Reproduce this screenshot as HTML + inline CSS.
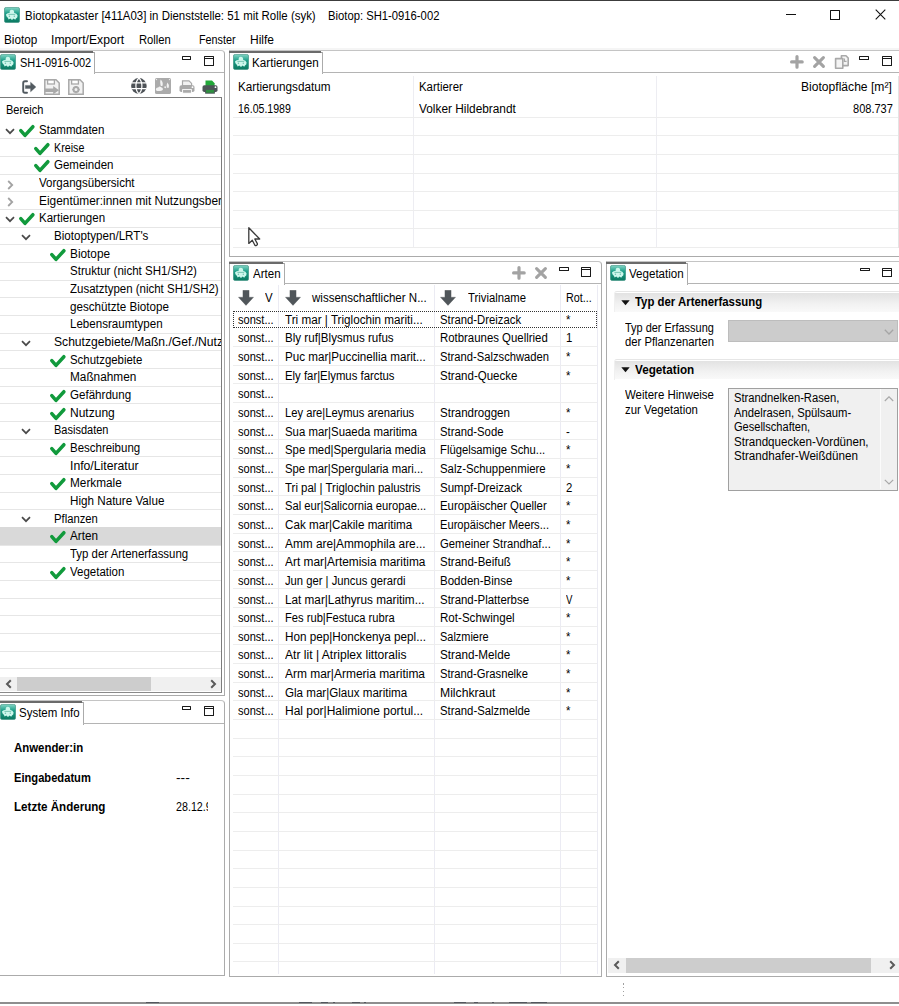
<!DOCTYPE html><html><head><meta charset="utf-8"><style>
html,body{margin:0;padding:0;background:#fff;overflow:hidden}
body{width:899px;height:1006px;position:relative;font-family:"Liberation Sans",sans-serif;font-size:11.5px;color:#000}
.t{position:absolute;white-space:nowrap;line-height:14px;font-size:12.5px;transform:scaleX(0.9);transform-origin:0 0}
.b{font-weight:bold}
</style></head><body>
<div style="position:absolute;left:0.00px;top:0.00px;width:899.00px;height:1.00px;background:#3c3c3c"></div>
<svg width="16" height="16" viewBox="0 0 16 16" style="position:absolute;left:4px;top:7px">
<defs><linearGradient id="g1" x1="0" y1="0" x2="0" y2="1"><stop offset="0" stop-color="#86d6c6"/><stop offset="0.4" stop-color="#1d9f89"/><stop offset="1" stop-color="#0b7860"/></linearGradient></defs>
<rect x="0.4" y="0.4" width="15.2" height="15.2" rx="1.8" fill="url(#g1)" stroke="#3f9484" stroke-width="0.7"/>
<path d="M5.6 6 Q5.4 2.8 7.8 2.7 Q10.4 2.8 10.2 6 Q12.6 5.8 13.6 8.6 Q13.6 11 12 11.6 L11.2 12.8 L9.6 11.6 L8 12.9 L6.3 11.6 L4.6 12.6 L4 11 Q1.9 9.6 2 7.6 Q3 5.6 5.6 6 Z" fill="#cdf7ec"/>
<path d="M4.4 7.4 H11.2" stroke="#6fbfae" stroke-width="0.9"/>
<circle cx="5.4" cy="9.3" r="0.7" fill="#6fbfae"/><circle cx="10.3" cy="9.3" r="0.7" fill="#6fbfae"/>
</svg><div class="t" style="left:25.00px;top:9.00px;transform:scaleX(0.9162);">Biotopkataster [411A03] in Dienststelle: 51 mit Rolle (syk)</div>
<div class="t" style="left:328.00px;top:9.00px;transform:scaleX(0.9006);">Biotop: SH1-0916-002</div>
<div style="position:absolute;left:786.00px;top:14.00px;width:10.00px;height:1.00px;background:#111"></div>
<div style="position:absolute;left:830.00px;top:10.00px;width:10.00px;height:10.00px;border:1.2px solid #111;box-sizing:border-box;border-radius:0.5px"></div>
<svg width="12" height="12" viewBox="0 0 12 12" style="position:absolute;left:874.5px;top:9.3px"><path d="M0.7 0.7 L10.3 10.3 M10.3 0.7 L0.7 10.3" stroke="#111" stroke-width="1.1"/></svg>
<div class="t" style="left:3.75px;top:33.00px;transform:scaleX(0.9393);">Biotop</div>
<div class="t" style="left:51.30px;top:33.00px;transform:scaleX(0.9747);">Import/Export</div>
<div class="t" style="left:138.90px;top:33.00px;transform:scaleX(0.8983);">Rollen</div>
<div class="t" style="left:198.70px;top:33.00px;transform:scaleX(0.8632);">Fenster</div>
<div class="t" style="left:249.70px;top:33.00px;transform:scaleX(0.9600);">Hilfe</div>
<div style="position:absolute;left:0.00px;top:48.00px;width:899.00px;height:2.00px;background:#f5f5f5"></div>
<div style="position:absolute;left:0.00px;top:50.00px;width:225.00px;height:646.00px;border:1px solid #ababab;border-top-color:#c4c4c4;box-sizing:border-box;border-left:none;border-top-right-radius:4px;"></div>
<div style="position:absolute;left:0.00px;top:51.00px;width:93.00px;height:2.00px;background:#6b6b6b"></div>
<div style="position:absolute;left:93.00px;top:52.00px;width:1.00px;height:1.00px;background:#9a9a9a"></div>
<div style="position:absolute;left:94.00px;top:52.00px;width:1.00px;height:22.00px;background:#ababab"></div>
<div style="position:absolute;left:94.00px;top:72.00px;width:130.00px;height:1.00px;background:#b4b4b4"></div>
<svg width="16" height="16" viewBox="0 0 16 16" style="position:absolute;left:0px;top:54px">
<defs><linearGradient id="g2" x1="0" y1="0" x2="0" y2="1"><stop offset="0" stop-color="#86d6c6"/><stop offset="0.4" stop-color="#1d9f89"/><stop offset="1" stop-color="#0b7860"/></linearGradient></defs>
<rect x="0.4" y="0.4" width="15.2" height="15.2" rx="1.8" fill="url(#g2)" stroke="#3f9484" stroke-width="0.7"/>
<path d="M5.6 6 Q5.4 2.8 7.8 2.7 Q10.4 2.8 10.2 6 Q12.6 5.8 13.6 8.6 Q13.6 11 12 11.6 L11.2 12.8 L9.6 11.6 L8 12.9 L6.3 11.6 L4.6 12.6 L4 11 Q1.9 9.6 2 7.6 Q3 5.6 5.6 6 Z" fill="#cdf7ec"/>
<path d="M4.4 7.4 H11.2" stroke="#6fbfae" stroke-width="0.9"/>
<circle cx="5.4" cy="9.3" r="0.7" fill="#6fbfae"/><circle cx="10.3" cy="9.3" r="0.7" fill="#6fbfae"/>
</svg><div class="t" style="left:19.60px;top:56.00px;transform:scaleX(0.8758);">SH1-0916-002</div>
<div style="position:absolute;left:181.80px;top:56.00px;width:9.70px;height:3.80px;border:1.3px solid #1a1a1a;box-sizing:border-box;border-radius:0.6px"></div>
<div style="position:absolute;left:204.00px;top:56.00px;width:9.80px;height:9.80px;border:1.3px solid #1a1a1a;box-sizing:border-box;border-radius:0.6px"></div>
<div style="position:absolute;left:204.00px;top:58.20px;width:9.80px;height:1.20px;background:#1a1a1a"></div>
<svg width="16" height="16" viewBox="0 0 16 16" style="position:absolute;left:21px;top:78.5px"><path d="M6 2.2 H4 Q2.2 2.2 2.2 4 V12 Q2.2 13.8 4 13.8 H6" fill="none" stroke="#525a60" stroke-width="1.9" stroke-linecap="round"/><path d="M4.4 6.4 H9.6 V3.2 L14.9 8 L9.6 12.8 V9.6 H4.4 Z" fill="#525a60" stroke="#525a60" stroke-width="0.4" stroke-linejoin="round"/></svg>
<svg width="16" height="16" viewBox="0 0 16 16" style="position:absolute;left:44px;top:78.5px"><path d="M0.8 0.8 H12 L15.2 4 V15.2 H0.8 Z" fill="#f2f2f2" stroke="#a9a9a9" stroke-width="1.5"/><rect x="3.6" y="1" width="6.8" height="4" fill="#fff" stroke="#a9a9a9" stroke-width="1.3"/><path d="M1 9.4 H9.2 V7 L15 11.2 L9.2 15.2 V13 H1 Z" fill="#a9a9a9"/></svg>
<svg width="16" height="16" viewBox="0 0 16 16" style="position:absolute;left:68px;top:78.5px"><path d="M0.8 0.8 H12 L15.2 4 V15.2 H0.8 Z" fill="#f2f2f2" stroke="#a9a9a9" stroke-width="1.5"/><rect x="3.6" y="1" width="6.8" height="4" fill="#fff" stroke="#a9a9a9" stroke-width="1.3"/><circle cx="8" cy="10.6" r="2.5" fill="none" stroke="#a9a9a9" stroke-width="2"/><path d="M8 6.9 V8 M8 13.2 V14.3 M4.3 10.6 H5.4 M10.6 10.6 H11.7" stroke="#a9a9a9" stroke-width="1.4"/></svg>
<svg width="16" height="16" viewBox="0 0 16 16" style="position:absolute;left:131.2px;top:78.3px"><circle cx="7.9" cy="7.9" r="7.8" fill="#4d5257"/><path d="M0.2 4.9 H15.6 M0.2 10.7 H15.6" stroke="#fff" stroke-width="1.2"/><path d="M7.9 0.1 Q4.9 3 4.9 7.9 Q4.9 12.8 7.9 15.7 M7.9 0.1 Q10.9 3 10.9 7.9 Q10.9 12.8 7.9 15.7" fill="none" stroke="#fff" stroke-width="1.2"/></svg>
<svg width="16" height="16" viewBox="0 0 16 16" style="position:absolute;left:155.2px;top:78.2px"><rect x="0" y="0" width="16" height="16" rx="1.6" fill="#ababab"/><path d="M5.6 1.4 Q8.4 4 7.6 7.4 Q6.8 8.8 5.6 7.4 Q4.6 4.2 5.6 1.4 Z" fill="#f2f2f2"/><path d="M0.8 11.6 Q1 9.2 3.2 9.4 Q4.6 7.8 6.2 9.2 Q8.2 9.4 7.9 11.8 Q7.4 13 5 12.9 L2 12.9 Q0.8 12.6 0.8 11.6 Z" fill="#f2f2f2"/><path d="M12.4 4.4 Q14.8 7 13.8 9.6 Q12.6 10.4 11.8 9 Q11.4 6.6 12.4 4.4 Z M9.6 8.2 Q11.2 8 11.2 9.6 Q10.4 10.8 9.3 9.8 Z" fill="#f2f2f2"/><circle cx="1.5" cy="1.6" r="0.7" fill="#f2f2f2"/><circle cx="14.5" cy="1.6" r="0.7" fill="#f2f2f2"/></svg>
<svg width="16" height="14" viewBox="0 0 16 14" style="position:absolute;left:179px;top:79.5px"><path d="M3.5 0.8 H10 L12.6 3.4 V5.5 H3.5 Z" fill="#f2f2f2" stroke="#a9a9a9" stroke-width="1.2"/><rect x="0.5" y="5.2" width="15" height="6.8" rx="1.8" fill="#a9a9a9"/><rect x="3.6" y="9.6" width="8.8" height="3.6" fill="#a9a9a9" stroke="#fff" stroke-width="0.9"/><circle cx="13.5" cy="7.2" r="0.9" fill="#fff"/></svg>
<svg width="16" height="14" viewBox="0 0 16 14" style="position:absolute;left:202.3px;top:79.5px"><path d="M3.5 0.6 H10 L12.6 3.2 V6 H3.5 Z" fill="#22a83a"/><rect x="0.5" y="5.2" width="15" height="6.8" rx="1.8" fill="#4d5558"/><rect x="3.6" y="9.4" width="8.8" height="3.8" fill="#2e8f40" stroke="#4d5558" stroke-width="0.9"/><circle cx="13.5" cy="7.2" r="0.9" fill="#fff"/></svg>
<div style="position:absolute;left:0.00px;top:97.00px;width:222.00px;height:1.00px;background:#7c7c7c"></div>
<div style="position:absolute;left:221.00px;top:97.00px;width:1.00px;height:596.00px;background:#7c7c7c"></div>
<div style="position:absolute;left:0.00px;top:692.00px;width:222.00px;height:1.00px;background:#8a8a8a"></div>
<div class="t" style="left:6.40px;top:103.00px;transform:scaleX(0.8821);">Bereich</div>
<div style="position:absolute;left:0;top:97px;width:221px;height:579px;overflow:hidden">
<div style="position:absolute;left:0.00px;top:41.30px;width:221.00px;height:1.00px;background:#e6e6e6"></div>
<div style="position:absolute;left:0.00px;top:58.96px;width:221.00px;height:1.00px;background:#e6e6e6"></div>
<div style="position:absolute;left:0.00px;top:76.63px;width:221.00px;height:1.00px;background:#e6e6e6"></div>
<div style="position:absolute;left:0.00px;top:94.30px;width:221.00px;height:1.00px;background:#e6e6e6"></div>
<div style="position:absolute;left:0.00px;top:111.97px;width:221.00px;height:1.00px;background:#e6e6e6"></div>
<div style="position:absolute;left:0.00px;top:129.63px;width:221.00px;height:1.00px;background:#e6e6e6"></div>
<div style="position:absolute;left:0.00px;top:147.30px;width:221.00px;height:1.00px;background:#e6e6e6"></div>
<div style="position:absolute;left:0.00px;top:164.97px;width:221.00px;height:1.00px;background:#e6e6e6"></div>
<div style="position:absolute;left:0.00px;top:182.63px;width:221.00px;height:1.00px;background:#e6e6e6"></div>
<div style="position:absolute;left:0.00px;top:200.30px;width:221.00px;height:1.00px;background:#e6e6e6"></div>
<div style="position:absolute;left:0.00px;top:217.97px;width:221.00px;height:1.00px;background:#e6e6e6"></div>
<div style="position:absolute;left:0.00px;top:235.63px;width:221.00px;height:1.00px;background:#e6e6e6"></div>
<div style="position:absolute;left:0.00px;top:253.30px;width:221.00px;height:1.00px;background:#e6e6e6"></div>
<div style="position:absolute;left:0.00px;top:270.97px;width:221.00px;height:1.00px;background:#e6e6e6"></div>
<div style="position:absolute;left:0.00px;top:288.63px;width:221.00px;height:1.00px;background:#e6e6e6"></div>
<div style="position:absolute;left:0.00px;top:306.30px;width:221.00px;height:1.00px;background:#e6e6e6"></div>
<div style="position:absolute;left:0.00px;top:323.97px;width:221.00px;height:1.00px;background:#e6e6e6"></div>
<div style="position:absolute;left:0.00px;top:341.64px;width:221.00px;height:1.00px;background:#e6e6e6"></div>
<div style="position:absolute;left:0.00px;top:359.30px;width:221.00px;height:1.00px;background:#e6e6e6"></div>
<div style="position:absolute;left:0.00px;top:376.97px;width:221.00px;height:1.00px;background:#e6e6e6"></div>
<div style="position:absolute;left:0.00px;top:394.64px;width:221.00px;height:1.00px;background:#e6e6e6"></div>
<div style="position:absolute;left:0.00px;top:412.30px;width:221.00px;height:1.00px;background:#e6e6e6"></div>
<div style="position:absolute;left:0.00px;top:429.97px;width:221.00px;height:1.00px;background:#e6e6e6"></div>
<div style="position:absolute;left:0.00px;top:429.97px;width:221.00px;height:17.67px;background:#d9d9d9"></div>
<div style="position:absolute;left:0.00px;top:447.64px;width:221.00px;height:1.00px;background:#e6e6e6"></div>
<div style="position:absolute;left:0.00px;top:465.31px;width:221.00px;height:1.00px;background:#e6e6e6"></div>
<div style="position:absolute;left:0.00px;top:482.97px;width:221.00px;height:1.00px;background:#e6e6e6"></div>
<div style="position:absolute;left:0.00px;top:500.64px;width:221.00px;height:1.00px;background:#e6e6e6"></div>
<div style="position:absolute;left:0.00px;top:518.31px;width:221.00px;height:1.00px;background:#e6e6e6"></div>
<div style="position:absolute;left:0.00px;top:535.97px;width:221.00px;height:1.00px;background:#e6e6e6"></div>
<div style="position:absolute;left:0.00px;top:553.64px;width:221.00px;height:1.00px;background:#e6e6e6"></div>
<div style="position:absolute;left:0.00px;top:571.31px;width:221.00px;height:1.00px;background:#e6e6e6"></div>
<svg width="10" height="7" viewBox="0 0 10 7" style="position:absolute;left:5.20px;top:30.53px"><path d="M1 1.2 L5 5.2 L9 1.2" fill="none" stroke="#4a4a4a" stroke-width="1.7"/></svg><svg width="18" height="17" viewBox="0 0 18 17" style="position:absolute;left:17.60px;top:26.13px"><path d="M2.8 7.6 L7 12.4 L14.9 3.7" fill="none" stroke="#119a3c" stroke-width="3.5" stroke-linecap="round" stroke-linejoin="round"/></svg><div class="t" style="left:38.70px;top:26.00px;transform:scaleX(0.9238);">Stammdaten</div>
<svg width="18" height="17" viewBox="0 0 18 17" style="position:absolute;left:33.10px;top:43.80px"><path d="M2.8 7.6 L7 12.4 L14.9 3.7" fill="none" stroke="#119a3c" stroke-width="3.5" stroke-linecap="round" stroke-linejoin="round"/></svg><div class="t" style="left:54.20px;top:44.00px;transform:scaleX(0.8559);">Kreise</div>
<svg width="18" height="17" viewBox="0 0 18 17" style="position:absolute;left:33.10px;top:61.46px"><path d="M2.8 7.6 L7 12.4 L14.9 3.7" fill="none" stroke="#119a3c" stroke-width="3.5" stroke-linecap="round" stroke-linejoin="round"/></svg><div class="t" style="left:54.20px;top:61.00px;transform:scaleX(0.9195);">Gemeinden</div>
<svg width="7" height="10" viewBox="0 0 7 10" style="position:absolute;left:6.80px;top:82.63px"><path d="M1.2 1 L5.2 5 L1.2 9" fill="none" stroke="#a3a3a3" stroke-width="1.8"/></svg><div class="t" style="left:38.70px;top:79.00px;transform:scaleX(0.9227);">Vorgangs&uuml;bersicht</div>
<svg width="7" height="10" viewBox="0 0 7 10" style="position:absolute;left:6.80px;top:100.30px"><path d="M1.2 1 L5.2 5 L1.2 9" fill="none" stroke="#a3a3a3" stroke-width="1.8"/></svg><div class="t" style="left:38.70px;top:97.00px;transform:scaleX(0.9506);">Eigent&uuml;mer:innen mit Nutzungsber</div>
<svg width="10" height="7" viewBox="0 0 10 7" style="position:absolute;left:5.20px;top:118.87px"><path d="M1 1.2 L5 5.2 L9 1.2" fill="none" stroke="#4a4a4a" stroke-width="1.7"/></svg><svg width="18" height="17" viewBox="0 0 18 17" style="position:absolute;left:17.60px;top:114.47px"><path d="M2.8 7.6 L7 12.4 L14.9 3.7" fill="none" stroke="#119a3c" stroke-width="3.5" stroke-linecap="round" stroke-linejoin="round"/></svg><div class="t" style="left:38.70px;top:114.00px;transform:scaleX(0.9232);">Kartierungen</div>
<svg width="10" height="7" viewBox="0 0 10 7" style="position:absolute;left:20.80px;top:136.53px"><path d="M1 1.2 L5 5.2 L9 1.2" fill="none" stroke="#4a4a4a" stroke-width="1.7"/></svg><div class="t" style="left:54.20px;top:132.00px;transform:scaleX(0.9300);">Biotoptypen/LRT's</div>
<svg width="18" height="17" viewBox="0 0 18 17" style="position:absolute;left:48.90px;top:149.80px"><path d="M2.8 7.6 L7 12.4 L14.9 3.7" fill="none" stroke="#119a3c" stroke-width="3.5" stroke-linecap="round" stroke-linejoin="round"/></svg><div class="t" style="left:70.00px;top:150.00px;transform:scaleX(0.9458);">Biotope</div>
<div class="t" style="left:70.00px;top:167.00px;transform:scaleX(0.9229);">Struktur (nicht SH1/SH2)</div>
<div class="t" style="left:70.00px;top:185.00px;transform:scaleX(0.9185);">Zusatztypen (nicht SH1/SH2)</div>
<div class="t" style="left:70.00px;top:203.00px;transform:scaleX(0.9304);">gesch&uuml;tzte Biotope</div>
<div class="t" style="left:70.00px;top:220.00px;transform:scaleX(0.9251);">Lebensraumtypen</div>
<svg width="10" height="7" viewBox="0 0 10 7" style="position:absolute;left:20.80px;top:242.53px"><path d="M1 1.2 L5 5.2 L9 1.2" fill="none" stroke="#4a4a4a" stroke-width="1.7"/></svg><div class="t" style="left:54.20px;top:238.00px;transform:scaleX(0.9690);">Schutzgebiete/Ma&szlig;n./Gef./Nutz</div>
<svg width="18" height="17" viewBox="0 0 18 17" style="position:absolute;left:48.90px;top:255.80px"><path d="M2.8 7.6 L7 12.4 L14.9 3.7" fill="none" stroke="#119a3c" stroke-width="3.5" stroke-linecap="round" stroke-linejoin="round"/></svg><div class="t" style="left:70.00px;top:256.00px;transform:scaleX(0.9129);">Schutzgebiete</div>
<div class="t" style="left:70.00px;top:273.00px;transform:scaleX(0.9444);">Ma&szlig;nahmen</div>
<svg width="18" height="17" viewBox="0 0 18 17" style="position:absolute;left:48.90px;top:291.13px"><path d="M2.8 7.6 L7 12.4 L14.9 3.7" fill="none" stroke="#119a3c" stroke-width="3.5" stroke-linecap="round" stroke-linejoin="round"/></svg><div class="t" style="left:70.00px;top:291.00px;transform:scaleX(0.9258);">Gef&auml;hrdung</div>
<svg width="18" height="17" viewBox="0 0 18 17" style="position:absolute;left:48.90px;top:308.80px"><path d="M2.8 7.6 L7 12.4 L14.9 3.7" fill="none" stroke="#119a3c" stroke-width="3.5" stroke-linecap="round" stroke-linejoin="round"/></svg><div class="t" style="left:70.00px;top:309.00px;transform:scaleX(0.9614);">Nutzung</div>
<svg width="10" height="7" viewBox="0 0 10 7" style="position:absolute;left:20.80px;top:330.87px"><path d="M1 1.2 L5 5.2 L9 1.2" fill="none" stroke="#4a4a4a" stroke-width="1.7"/></svg><div class="t" style="left:54.20px;top:326.00px;transform:scaleX(0.8803);">Basisdaten</div>
<svg width="18" height="17" viewBox="0 0 18 17" style="position:absolute;left:48.90px;top:344.14px"><path d="M2.8 7.6 L7 12.4 L14.9 3.7" fill="none" stroke="#119a3c" stroke-width="3.5" stroke-linecap="round" stroke-linejoin="round"/></svg><div class="t" style="left:70.00px;top:344.00px;transform:scaleX(0.9175);">Beschreibung</div>
<div class="t" style="left:70.00px;top:362.00px;transform:scaleX(0.9772);">Info/Literatur</div>
<svg width="18" height="17" viewBox="0 0 18 17" style="position:absolute;left:48.90px;top:379.47px"><path d="M2.8 7.6 L7 12.4 L14.9 3.7" fill="none" stroke="#119a3c" stroke-width="3.5" stroke-linecap="round" stroke-linejoin="round"/></svg><div class="t" style="left:70.00px;top:379.00px;transform:scaleX(0.9435);">Merkmale</div>
<div class="t" style="left:70.00px;top:397.00px;transform:scaleX(0.9328);">High Nature Value</div>
<svg width="10" height="7" viewBox="0 0 10 7" style="position:absolute;left:20.80px;top:419.20px"><path d="M1 1.2 L5 5.2 L9 1.2" fill="none" stroke="#4a4a4a" stroke-width="1.7"/></svg><div class="t" style="left:54.20px;top:415.00px;transform:scaleX(0.9012);">Pflanzen</div>
<svg width="18" height="17" viewBox="0 0 18 17" style="position:absolute;left:48.90px;top:432.47px"><path d="M2.8 7.6 L7 12.4 L14.9 3.7" fill="none" stroke="#119a3c" stroke-width="3.5" stroke-linecap="round" stroke-linejoin="round"/></svg><div class="t" style="left:70.00px;top:432.00px;transform:scaleX(0.9365);">Arten</div>
<div class="t" style="left:70.00px;top:450.00px;transform:scaleX(0.9141);">Typ der Artenerfassung</div>
<svg width="18" height="17" viewBox="0 0 18 17" style="position:absolute;left:48.90px;top:467.81px"><path d="M2.8 7.6 L7 12.4 L14.9 3.7" fill="none" stroke="#119a3c" stroke-width="3.5" stroke-linecap="round" stroke-linejoin="round"/></svg><div class="t" style="left:70.00px;top:468.00px;transform:scaleX(0.9188);">Vegetation</div>
</div>
<div style="position:absolute;left:0.00px;top:676.80px;width:221.00px;height:14.60px;background:#f0f0f0"></div>
<div style="position:absolute;left:16.80px;top:676.80px;width:134.50px;height:14.60px;background:#cdcdcd"></div>
<svg width="8" height="10" viewBox="0 0 8 10" style="position:absolute;left:4.5px;top:679px"><path d="M5.8 1.2 L2 5 L5.8 8.8" fill="none" stroke="#5a5a5a" stroke-width="2"/></svg><svg width="8" height="10" viewBox="0 0 8 10" style="position:absolute;left:208.5px;top:679px"><path d="M2.2 1.2 L6 5 L2.2 8.8" fill="none" stroke="#5a5a5a" stroke-width="2"/></svg>
<div style="position:absolute;left:0.00px;top:700.00px;width:225.00px;height:276.00px;border:1px solid #ababab;border-top-color:#c4c4c4;box-sizing:border-box;border-left:none;border-top-right-radius:4px;"></div>
<div style="position:absolute;left:0.00px;top:701.00px;width:82.00px;height:2.00px;background:#6b6b6b"></div>
<div style="position:absolute;left:82.00px;top:702.00px;width:1.00px;height:1.00px;background:#9a9a9a"></div>
<div style="position:absolute;left:83.00px;top:702.00px;width:1.00px;height:23.00px;background:#ababab"></div>
<div style="position:absolute;left:83.00px;top:723.00px;width:141.00px;height:1.00px;background:#b4b4b4"></div>
<svg width="16" height="16" viewBox="0 0 16 16" style="position:absolute;left:0px;top:704.4px">
<defs><linearGradient id="g3" x1="0" y1="0" x2="0" y2="1"><stop offset="0" stop-color="#86d6c6"/><stop offset="0.4" stop-color="#1d9f89"/><stop offset="1" stop-color="#0b7860"/></linearGradient></defs>
<rect x="0.4" y="0.4" width="15.2" height="15.2" rx="1.8" fill="url(#g3)" stroke="#3f9484" stroke-width="0.7"/>
<path d="M5.6 6 Q5.4 2.8 7.8 2.7 Q10.4 2.8 10.2 6 Q12.6 5.8 13.6 8.6 Q13.6 11 12 11.6 L11.2 12.8 L9.6 11.6 L8 12.9 L6.3 11.6 L4.6 12.6 L4 11 Q1.9 9.6 2 7.6 Q3 5.6 5.6 6 Z" fill="#cdf7ec"/>
<path d="M4.4 7.4 H11.2" stroke="#6fbfae" stroke-width="0.9"/>
<circle cx="5.4" cy="9.3" r="0.7" fill="#6fbfae"/><circle cx="10.3" cy="9.3" r="0.7" fill="#6fbfae"/>
</svg><div class="t" style="left:19.20px;top:706.00px;transform:scaleX(0.9182);">System Info</div>
<div style="position:absolute;left:181.60px;top:706.10px;width:9.70px;height:3.80px;border:1.3px solid #1a1a1a;box-sizing:border-box;border-radius:0.6px"></div>
<div style="position:absolute;left:203.90px;top:706.10px;width:9.80px;height:9.80px;border:1.3px solid #1a1a1a;box-sizing:border-box;border-radius:0.6px"></div>
<div style="position:absolute;left:203.90px;top:708.30px;width:9.80px;height:1.20px;background:#1a1a1a"></div>
<div class="t b" style="left:14.00px;top:741.00px;transform:scaleX(0.9128);">Anwender:in</div>
<div class="t b" style="left:14.00px;top:771.00px;transform:scaleX(0.8920);">Eingabedatum</div>
<div class="t b" style="left:14.00px;top:800.00px;transform:scaleX(0.9270);">Letzte &Auml;nderung</div>
<div class="t" style="left:176.00px;top:771.00px;transform:scaleX(1.1040);">---</div>
<div style="position:absolute;left:176px;top:799px;width:31.5px;height:16px;overflow:hidden"><div class="t" style="left:0.00px;top:1px;transform:scaleX(0.8563)">28.12.9</div></div>
<div style="position:absolute;left:229.00px;top:50.00px;width:676.00px;height:207.00px;border:1px solid #ababab;border-top-color:#c4c4c4;box-sizing:border-box;border-right:none;"></div>
<div style="position:absolute;left:229.00px;top:51.00px;width:92.00px;height:2.00px;background:#6b6b6b"></div>
<div style="position:absolute;left:321.00px;top:52.00px;width:1.00px;height:1.00px;background:#9a9a9a"></div>
<div style="position:absolute;left:322.00px;top:52.00px;width:1.00px;height:22.00px;background:#ababab"></div>
<div style="position:absolute;left:322.00px;top:72.00px;width:583.00px;height:1.00px;background:#b4b4b4"></div>
<svg width="16" height="16" viewBox="0 0 16 16" style="position:absolute;left:233px;top:54.2px">
<defs><linearGradient id="g4" x1="0" y1="0" x2="0" y2="1"><stop offset="0" stop-color="#86d6c6"/><stop offset="0.4" stop-color="#1d9f89"/><stop offset="1" stop-color="#0b7860"/></linearGradient></defs>
<rect x="0.4" y="0.4" width="15.2" height="15.2" rx="1.8" fill="url(#g4)" stroke="#3f9484" stroke-width="0.7"/>
<path d="M5.6 6 Q5.4 2.8 7.8 2.7 Q10.4 2.8 10.2 6 Q12.6 5.8 13.6 8.6 Q13.6 11 12 11.6 L11.2 12.8 L9.6 11.6 L8 12.9 L6.3 11.6 L4.6 12.6 L4 11 Q1.9 9.6 2 7.6 Q3 5.6 5.6 6 Z" fill="#cdf7ec"/>
<path d="M4.4 7.4 H11.2" stroke="#6fbfae" stroke-width="0.9"/>
<circle cx="5.4" cy="9.3" r="0.7" fill="#6fbfae"/><circle cx="10.3" cy="9.3" r="0.7" fill="#6fbfae"/>
</svg><div class="t" style="left:252.10px;top:56.00px;transform:scaleX(0.9330);">Kartierungen</div>
<svg width="16" height="16" viewBox="0 0 16 16" style="position:absolute;left:788.5px;top:54px"><path d="M8 2.6 V13.2 M2.6 7.9 H13.2" stroke="#a3a3a3" stroke-width="3.2" stroke-linecap="round"/></svg><svg width="14" height="14" viewBox="0 0 14 14" style="position:absolute;left:812px;top:55px"><path d="M2.6 2.6 L11.4 11.4 M11.4 2.6 L2.6 11.4" stroke="#a3a3a3" stroke-width="3.1" stroke-linecap="round"/></svg><svg width="16" height="16" viewBox="0 0 16 16" style="position:absolute;left:834px;top:54px"><path d="M7.4 1.8 H12 L14.2 4 V11.6 H7.4 Z" fill="#f4f4f4" stroke="#a9a9a9" stroke-width="1.6" stroke-linejoin="round"/><path d="M1.6 4.6 H8.8 V14.2 H1.6 Z" fill="#f4f4f4" stroke="#a9a9a9" stroke-width="1.6" stroke-linejoin="round"/><path d="M10.4 4.6 V7.4 H12.6" fill="none" stroke="#a9a9a9" stroke-width="1.2"/></svg>
<div style="position:absolute;left:859.40px;top:56.00px;width:9.70px;height:3.80px;border:1.3px solid #1a1a1a;box-sizing:border-box;border-radius:0.6px"></div>
<div style="position:absolute;left:882.00px;top:56.00px;width:9.80px;height:9.80px;border:1.3px solid #1a1a1a;box-sizing:border-box;border-radius:0.6px"></div>
<div style="position:absolute;left:882.00px;top:58.20px;width:9.80px;height:1.20px;background:#1a1a1a"></div>
<div class="t" style="left:238.00px;top:80.00px;transform:scaleX(0.9372);">Kartierungsdatum</div>
<div class="t" style="left:419.00px;top:80.00px;transform:scaleX(0.9144);">Kartierer</div>
<div class="t" style="left:801.20px;top:80.00px;transform:scaleX(0.9680);">Biotopfl&auml;che [m&sup2;]</div>
<div style="position:absolute;left:412.70px;top:76.00px;width:1.00px;height:172.00px;background:#ededf2"></div>
<div style="position:absolute;left:656.20px;top:76.00px;width:1.00px;height:172.00px;background:#ededf2"></div>
<div style="position:absolute;left:897.50px;top:76.00px;width:1.00px;height:172.00px;background:#e4e4e4"></div>
<div style="position:absolute;left:233.00px;top:116.80px;width:665.00px;height:1.00px;background:#ededed"></div>
<div style="position:absolute;left:233.00px;top:135.40px;width:665.00px;height:1.00px;background:#ededed"></div>
<div style="position:absolute;left:233.00px;top:154.00px;width:665.00px;height:1.00px;background:#ededed"></div>
<div style="position:absolute;left:233.00px;top:172.60px;width:665.00px;height:1.00px;background:#ededed"></div>
<div style="position:absolute;left:233.00px;top:191.20px;width:665.00px;height:1.00px;background:#ededed"></div>
<div style="position:absolute;left:233.00px;top:209.80px;width:665.00px;height:1.00px;background:#ededed"></div>
<div style="position:absolute;left:233.00px;top:228.40px;width:665.00px;height:1.00px;background:#ededed"></div>
<div style="position:absolute;left:233.00px;top:247.00px;width:665.00px;height:1.00px;background:#ededed"></div>
<div class="t" style="left:238.00px;top:102.00px;transform:scaleX(0.8450);">16.05.1989</div>
<div class="t" style="left:419.00px;top:102.00px;transform:scaleX(0.9481);">Volker Hildebrandt</div>
<div class="t" style="left:852.70px;top:102.00px;transform:scaleX(0.8827);">808.737</div>
<svg width="16" height="22" viewBox="0 0 16 22" style="position:absolute;left:247px;top:226px"><path d="M1.8 1.8 V17.4 L5.3 14.2 L7.9 19.2 Q8.6 20 9.4 19.4 L10.2 18.8 Q10.6 18.2 10.2 17.4 L7.8 13 H12.7 Z" fill="#fff" stroke="#3a3a3a" stroke-width="1.3" stroke-linejoin="round"/></svg>
<div style="position:absolute;left:229.00px;top:261.00px;width:373.00px;height:716.00px;border:1px solid #ababab;border-top-color:#c4c4c4;box-sizing:border-box;border-top-right-radius:4px;"></div>
<div style="position:absolute;left:229.00px;top:262.00px;width:54.00px;height:2.00px;background:#6b6b6b"></div>
<div style="position:absolute;left:283.00px;top:263.00px;width:1.00px;height:1.00px;background:#9a9a9a"></div>
<div style="position:absolute;left:284.00px;top:263.00px;width:1.00px;height:22.00px;background:#ababab"></div>
<div style="position:absolute;left:284.00px;top:283.00px;width:317.00px;height:1.00px;background:#b4b4b4"></div>
<svg width="16" height="16" viewBox="0 0 16 16" style="position:absolute;left:233px;top:265.1px">
<defs><linearGradient id="g5" x1="0" y1="0" x2="0" y2="1"><stop offset="0" stop-color="#86d6c6"/><stop offset="0.4" stop-color="#1d9f89"/><stop offset="1" stop-color="#0b7860"/></linearGradient></defs>
<rect x="0.4" y="0.4" width="15.2" height="15.2" rx="1.8" fill="url(#g5)" stroke="#3f9484" stroke-width="0.7"/>
<path d="M5.6 6 Q5.4 2.8 7.8 2.7 Q10.4 2.8 10.2 6 Q12.6 5.8 13.6 8.6 Q13.6 11 12 11.6 L11.2 12.8 L9.6 11.6 L8 12.9 L6.3 11.6 L4.6 12.6 L4 11 Q1.9 9.6 2 7.6 Q3 5.6 5.6 6 Z" fill="#cdf7ec"/>
<path d="M4.4 7.4 H11.2" stroke="#6fbfae" stroke-width="0.9"/>
<circle cx="5.4" cy="9.3" r="0.7" fill="#6fbfae"/><circle cx="10.3" cy="9.3" r="0.7" fill="#6fbfae"/>
</svg><div class="t" style="left:252.60px;top:267.00px;transform:scaleX(0.9231);">Arten</div>
<svg width="16" height="16" viewBox="0 0 16 16" style="position:absolute;left:510.5px;top:264.7px"><path d="M8 2.6 V13.2 M2.6 7.9 H13.2" stroke="#a3a3a3" stroke-width="3.2" stroke-linecap="round"/></svg><svg width="14" height="14" viewBox="0 0 14 14" style="position:absolute;left:534px;top:265.8px"><path d="M2.6 2.6 L11.4 11.4 M11.4 2.6 L2.6 11.4" stroke="#a3a3a3" stroke-width="3.1" stroke-linecap="round"/></svg>
<div style="position:absolute;left:559.00px;top:266.90px;width:9.70px;height:3.80px;border:1.3px solid #1a1a1a;box-sizing:border-box;border-radius:0.6px"></div>
<div style="position:absolute;left:581.20px;top:266.90px;width:9.80px;height:9.80px;border:1.3px solid #1a1a1a;box-sizing:border-box;border-radius:0.6px"></div>
<div style="position:absolute;left:581.20px;top:269.10px;width:9.80px;height:1.20px;background:#1a1a1a"></div>
<svg width="16" height="16" viewBox="0 0 16 16" style="position:absolute;left:237.50px;top:290.30px"><path d="M4.9 0.3 H11.1 V7.2 H15.6 L8 15.4 L0.4 7.2 H4.9 Z" fill="#50565a" stroke="#50565a" stroke-width="0.3" stroke-linejoin="round"/></svg><div class="t" style="left:265.00px;top:291.00px;transform:scaleX(0.9157);">V</div>
<svg width="16" height="16" viewBox="0 0 16 16" style="position:absolute;left:284.80px;top:290.30px"><path d="M4.9 0.3 H11.1 V7.2 H15.6 L8 15.4 L0.4 7.2 H4.9 Z" fill="#50565a" stroke="#50565a" stroke-width="0.3" stroke-linejoin="round"/></svg><div class="t" style="left:312.49px;top:291.00px;transform:scaleX(0.9228);">wissenschaftlicher N...</div>
<svg width="16" height="16" viewBox="0 0 16 16" style="position:absolute;left:440.00px;top:290.30px"><path d="M4.9 0.3 H11.1 V7.2 H15.6 L8 15.4 L0.4 7.2 H4.9 Z" fill="#50565a" stroke="#50565a" stroke-width="0.3" stroke-linejoin="round"/></svg><div class="t" style="left:468.30px;top:291.00px;transform:scaleX(0.9033);">Trivialname</div>
<div class="t" style="left:566.20px;top:291.00px;transform:scaleX(0.8629);">Rot...</div>
<div style="position:absolute;left:278.00px;top:285.00px;width:1.00px;height:689.00px;background:#ebebf3"></div>
<div style="position:absolute;left:434.00px;top:285.00px;width:1.00px;height:689.00px;background:#ebebf3"></div>
<div style="position:absolute;left:559.60px;top:285.00px;width:1.00px;height:689.00px;background:#ebebf3"></div>
<div style="position:absolute;left:597.20px;top:285.00px;width:1.00px;height:689.00px;background:#ebebf3"></div>
<div style="position:absolute;left:233.00px;top:346.00px;width:364.00px;height:1.00px;background:#ededed"></div>
<div style="position:absolute;left:233.00px;top:364.65px;width:364.00px;height:1.00px;background:#ededed"></div>
<div style="position:absolute;left:233.00px;top:383.30px;width:364.00px;height:1.00px;background:#ededed"></div>
<div style="position:absolute;left:233.00px;top:401.95px;width:364.00px;height:1.00px;background:#ededed"></div>
<div style="position:absolute;left:233.00px;top:420.60px;width:364.00px;height:1.00px;background:#ededed"></div>
<div style="position:absolute;left:233.00px;top:439.25px;width:364.00px;height:1.00px;background:#ededed"></div>
<div style="position:absolute;left:233.00px;top:457.90px;width:364.00px;height:1.00px;background:#ededed"></div>
<div style="position:absolute;left:233.00px;top:476.55px;width:364.00px;height:1.00px;background:#ededed"></div>
<div style="position:absolute;left:233.00px;top:495.20px;width:364.00px;height:1.00px;background:#ededed"></div>
<div style="position:absolute;left:233.00px;top:513.85px;width:364.00px;height:1.00px;background:#ededed"></div>
<div style="position:absolute;left:233.00px;top:532.50px;width:364.00px;height:1.00px;background:#ededed"></div>
<div style="position:absolute;left:233.00px;top:551.15px;width:364.00px;height:1.00px;background:#ededed"></div>
<div style="position:absolute;left:233.00px;top:569.80px;width:364.00px;height:1.00px;background:#ededed"></div>
<div style="position:absolute;left:233.00px;top:588.45px;width:364.00px;height:1.00px;background:#ededed"></div>
<div style="position:absolute;left:233.00px;top:607.10px;width:364.00px;height:1.00px;background:#ededed"></div>
<div style="position:absolute;left:233.00px;top:625.75px;width:364.00px;height:1.00px;background:#ededed"></div>
<div style="position:absolute;left:233.00px;top:644.40px;width:364.00px;height:1.00px;background:#ededed"></div>
<div style="position:absolute;left:233.00px;top:663.05px;width:364.00px;height:1.00px;background:#ededed"></div>
<div style="position:absolute;left:233.00px;top:681.70px;width:364.00px;height:1.00px;background:#ededed"></div>
<div style="position:absolute;left:233.00px;top:700.35px;width:364.00px;height:1.00px;background:#ededed"></div>
<div style="position:absolute;left:233.00px;top:719.00px;width:364.00px;height:1.00px;background:#ededed"></div>
<div style="position:absolute;left:233.00px;top:737.65px;width:364.00px;height:1.00px;background:#ededed"></div>
<div style="position:absolute;left:233.00px;top:756.30px;width:364.00px;height:1.00px;background:#ededed"></div>
<div style="position:absolute;left:233.00px;top:774.95px;width:364.00px;height:1.00px;background:#ededed"></div>
<div style="position:absolute;left:233.00px;top:793.60px;width:364.00px;height:1.00px;background:#ededed"></div>
<div style="position:absolute;left:233.00px;top:812.25px;width:364.00px;height:1.00px;background:#ededed"></div>
<div style="position:absolute;left:233.00px;top:830.90px;width:364.00px;height:1.00px;background:#ededed"></div>
<div style="position:absolute;left:233.00px;top:849.55px;width:364.00px;height:1.00px;background:#ededed"></div>
<div style="position:absolute;left:233.00px;top:868.20px;width:364.00px;height:1.00px;background:#ededed"></div>
<div style="position:absolute;left:233.00px;top:886.85px;width:364.00px;height:1.00px;background:#ededed"></div>
<div style="position:absolute;left:233.00px;top:905.50px;width:364.00px;height:1.00px;background:#ededed"></div>
<div style="position:absolute;left:233.00px;top:924.15px;width:364.00px;height:1.00px;background:#ededed"></div>
<div style="position:absolute;left:233.00px;top:942.80px;width:364.00px;height:1.00px;background:#ededed"></div>
<div style="position:absolute;left:233.00px;top:961.45px;width:364.00px;height:1.00px;background:#ededed"></div>
<div class="t" style="left:237.90px;top:313.00px;transform:scaleX(0.8834);">sonst...</div>
<div class="t" style="left:285.00px;top:313.00px;transform:scaleX(0.9348);">Tri mar | Triglochin mariti...</div>
<div class="t" style="left:440.30px;top:313.00px;transform:scaleX(0.9052);">Strand-Dreizack</div>
<div class="t" style="left:566.40px;top:313.00px;transform:scaleX(0.9100);">*</div>
<div class="t" style="left:237.90px;top:331.00px;transform:scaleX(0.8834);">sonst...</div>
<div class="t" style="left:285.00px;top:331.00px;transform:scaleX(0.9275);">Bly ruf|Blysmus rufus</div>
<div class="t" style="left:440.30px;top:331.00px;transform:scaleX(0.9119);">Rotbraunes Quellried</div>
<div class="t" style="left:566.40px;top:331.00px;transform:scaleX(0.9100);">1</div>
<div class="t" style="left:237.90px;top:350.00px;transform:scaleX(0.8834);">sonst...</div>
<div class="t" style="left:285.00px;top:350.00px;transform:scaleX(0.9312);">Puc mar|Puccinellia marit...</div>
<div class="t" style="left:440.30px;top:350.00px;transform:scaleX(0.8964);">Strand-Salzschwaden</div>
<div class="t" style="left:566.40px;top:350.00px;transform:scaleX(0.9100);">*</div>
<div class="t" style="left:237.90px;top:369.00px;transform:scaleX(0.8834);">sonst...</div>
<div class="t" style="left:285.00px;top:369.00px;transform:scaleX(0.9080);">Ely far|Elymus farctus</div>
<div class="t" style="left:440.30px;top:369.00px;transform:scaleX(0.9203);">Strand-Quecke</div>
<div class="t" style="left:566.40px;top:369.00px;transform:scaleX(0.9100);">*</div>
<div class="t" style="left:237.90px;top:387.00px;transform:scaleX(0.8834);">sonst...</div>
<div class="t" style="left:237.90px;top:406.00px;transform:scaleX(0.8834);">sonst...</div>
<div class="t" style="left:285.00px;top:406.00px;transform:scaleX(0.8954);">Ley are|Leymus arenarius</div>
<div class="t" style="left:440.30px;top:406.00px;transform:scaleX(0.9234);">Strandroggen</div>
<div class="t" style="left:566.40px;top:406.00px;transform:scaleX(0.9100);">*</div>
<div class="t" style="left:237.90px;top:425.00px;transform:scaleX(0.8834);">sonst...</div>
<div class="t" style="left:285.00px;top:425.00px;transform:scaleX(0.9117);">Sua mar|Suaeda maritima</div>
<div class="t" style="left:440.30px;top:425.00px;transform:scaleX(0.9046);">Strand-Sode</div>
<div class="t" style="left:566.40px;top:425.00px;transform:scaleX(0.9100);">-</div>
<div class="t" style="left:237.90px;top:443.00px;transform:scaleX(0.8834);">sonst...</div>
<div class="t" style="left:285.00px;top:443.00px;transform:scaleX(0.9096);">Spe med|Spergularia media</div>
<div class="t" style="left:440.30px;top:443.00px;transform:scaleX(0.9015);">Fl&uuml;gelsamige Schu...</div>
<div class="t" style="left:566.40px;top:443.00px;transform:scaleX(0.9100);">*</div>
<div class="t" style="left:237.90px;top:462.00px;transform:scaleX(0.8834);">sonst...</div>
<div class="t" style="left:285.00px;top:462.00px;transform:scaleX(0.9056);">Spe mar|Spergularia mari...</div>
<div class="t" style="left:440.30px;top:462.00px;transform:scaleX(0.9103);">Salz-Schuppenmiere</div>
<div class="t" style="left:566.40px;top:462.00px;transform:scaleX(0.9100);">*</div>
<div class="t" style="left:237.90px;top:481.00px;transform:scaleX(0.8834);">sonst...</div>
<div class="t" style="left:285.00px;top:481.00px;transform:scaleX(0.9162);">Tri pal | Triglochin palustris</div>
<div class="t" style="left:440.30px;top:481.00px;transform:scaleX(0.9225);">Sumpf-Dreizack</div>
<div class="t" style="left:566.40px;top:481.00px;transform:scaleX(0.9100);">2</div>
<div class="t" style="left:237.90px;top:499.00px;transform:scaleX(0.8834);">sonst...</div>
<div class="t" style="left:285.00px;top:499.00px;transform:scaleX(0.8965);">Sal eur|Salicornia europae...</div>
<div class="t" style="left:440.30px;top:499.00px;transform:scaleX(0.9089);">Europ&auml;ischer Queller</div>
<div class="t" style="left:566.40px;top:499.00px;transform:scaleX(0.9100);">*</div>
<div class="t" style="left:237.90px;top:518.00px;transform:scaleX(0.8834);">sonst...</div>
<div class="t" style="left:285.00px;top:518.00px;transform:scaleX(0.9319);">Cak mar|Cakile maritima</div>
<div class="t" style="left:440.30px;top:518.00px;transform:scaleX(0.8913);">Europ&auml;ischer Meers...</div>
<div class="t" style="left:566.40px;top:518.00px;transform:scaleX(0.9100);">*</div>
<div class="t" style="left:237.90px;top:537.00px;transform:scaleX(0.8834);">sonst...</div>
<div class="t" style="left:285.00px;top:537.00px;transform:scaleX(0.9468);">Amm are|Ammophila are...</div>
<div class="t" style="left:440.30px;top:537.00px;transform:scaleX(0.9008);">Gemeiner Strandhaf...</div>
<div class="t" style="left:566.40px;top:537.00px;transform:scaleX(0.9100);">*</div>
<div class="t" style="left:237.90px;top:555.00px;transform:scaleX(0.8834);">sonst...</div>
<div class="t" style="left:285.00px;top:555.00px;transform:scaleX(0.9506);">Art mar|Artemisia maritima</div>
<div class="t" style="left:440.30px;top:555.00px;transform:scaleX(0.9183);">Strand-Beifu&szlig;</div>
<div class="t" style="left:566.40px;top:555.00px;transform:scaleX(0.9100);">*</div>
<div class="t" style="left:237.90px;top:574.00px;transform:scaleX(0.8834);">sonst...</div>
<div class="t" style="left:285.00px;top:574.00px;transform:scaleX(0.8992);">Jun ger | Juncus gerardi</div>
<div class="t" style="left:440.30px;top:574.00px;transform:scaleX(0.9223);">Bodden-Binse</div>
<div class="t" style="left:566.40px;top:574.00px;transform:scaleX(0.9100);">*</div>
<div class="t" style="left:237.90px;top:593.00px;transform:scaleX(0.8834);">sonst...</div>
<div class="t" style="left:285.00px;top:593.00px;transform:scaleX(0.9394);">Lat mar|Lathyrus maritim...</div>
<div class="t" style="left:440.30px;top:593.00px;transform:scaleX(0.9157);">Strand-Platterbse</div>
<div class="t" style="left:566.40px;top:593.00px;transform:scaleX(0.7711);">V</div>
<div class="t" style="left:237.90px;top:611.00px;transform:scaleX(0.8834);">sonst...</div>
<div class="t" style="left:285.00px;top:611.00px;transform:scaleX(0.8933);">Fes rub|Festuca rubra</div>
<div class="t" style="left:440.30px;top:611.00px;transform:scaleX(0.9268);">Rot-Schwingel</div>
<div class="t" style="left:566.40px;top:611.00px;transform:scaleX(0.9100);">*</div>
<div class="t" style="left:237.90px;top:630.00px;transform:scaleX(0.8834);">sonst...</div>
<div class="t" style="left:285.00px;top:630.00px;transform:scaleX(0.9363);">Hon pep|Honckenya pepl...</div>
<div class="t" style="left:440.30px;top:630.00px;transform:scaleX(0.8759);">Salzmiere</div>
<div class="t" style="left:566.40px;top:630.00px;transform:scaleX(0.9100);">*</div>
<div class="t" style="left:237.90px;top:648.00px;transform:scaleX(0.8834);">sonst...</div>
<div class="t" style="left:285.00px;top:648.00px;transform:scaleX(0.9681);">Atr lit | Atriplex littoralis</div>
<div class="t" style="left:440.30px;top:648.00px;transform:scaleX(0.9347);">Strand-Melde</div>
<div class="t" style="left:566.40px;top:648.00px;transform:scaleX(0.9100);">*</div>
<div class="t" style="left:237.90px;top:667.00px;transform:scaleX(0.8834);">sonst...</div>
<div class="t" style="left:285.00px;top:667.00px;transform:scaleX(0.9570);">Arm mar|Armeria maritima</div>
<div class="t" style="left:440.30px;top:667.00px;transform:scaleX(0.8980);">Strand-Grasnelke</div>
<div class="t" style="left:566.40px;top:667.00px;transform:scaleX(0.9100);">*</div>
<div class="t" style="left:237.90px;top:686.00px;transform:scaleX(0.8834);">sonst...</div>
<div class="t" style="left:285.00px;top:686.00px;transform:scaleX(0.9272);">Gla mar|Glaux maritima</div>
<div class="t" style="left:440.30px;top:686.00px;transform:scaleX(0.9737);">Milchkraut</div>
<div class="t" style="left:566.40px;top:686.00px;transform:scaleX(0.9100);">*</div>
<div class="t" style="left:237.90px;top:704.00px;transform:scaleX(0.8834);">sonst...</div>
<div class="t" style="left:285.00px;top:704.00px;transform:scaleX(0.9577);">Hal por|Halimione portul...</div>
<div class="t" style="left:440.30px;top:704.00px;transform:scaleX(0.9074);">Strand-Salzmelde</div>
<div class="t" style="left:566.40px;top:704.00px;transform:scaleX(0.9100);">*</div>
<div style="position:absolute;left:233.00px;top:311.00px;width:364.00px;height:17.00px;border:1px dotted #333;box-sizing:border-box"></div>
<div style="position:absolute;left:606.00px;top:261.00px;width:299.00px;height:716.00px;border:1px solid #ababab;border-top-color:#c4c4c4;box-sizing:border-box;border-right:none;"></div>
<div style="position:absolute;left:606.00px;top:262.00px;width:80.00px;height:2.00px;background:#6b6b6b"></div>
<div style="position:absolute;left:686.00px;top:263.00px;width:1.00px;height:1.00px;background:#9a9a9a"></div>
<div style="position:absolute;left:687.00px;top:263.00px;width:1.00px;height:22.00px;background:#ababab"></div>
<div style="position:absolute;left:687.00px;top:283.00px;width:218.00px;height:1.00px;background:#b4b4b4"></div>
<svg width="16" height="16" viewBox="0 0 16 16" style="position:absolute;left:610px;top:265px">
<defs><linearGradient id="g6" x1="0" y1="0" x2="0" y2="1"><stop offset="0" stop-color="#86d6c6"/><stop offset="0.4" stop-color="#1d9f89"/><stop offset="1" stop-color="#0b7860"/></linearGradient></defs>
<rect x="0.4" y="0.4" width="15.2" height="15.2" rx="1.8" fill="url(#g6)" stroke="#3f9484" stroke-width="0.7"/>
<path d="M5.6 6 Q5.4 2.8 7.8 2.7 Q10.4 2.8 10.2 6 Q12.6 5.8 13.6 8.6 Q13.6 11 12 11.6 L11.2 12.8 L9.6 11.6 L8 12.9 L6.3 11.6 L4.6 12.6 L4 11 Q1.9 9.6 2 7.6 Q3 5.6 5.6 6 Z" fill="#cdf7ec"/>
<path d="M4.4 7.4 H11.2" stroke="#6fbfae" stroke-width="0.9"/>
<circle cx="5.4" cy="9.3" r="0.7" fill="#6fbfae"/><circle cx="10.3" cy="9.3" r="0.7" fill="#6fbfae"/>
</svg><div class="t" style="left:629.40px;top:267.00px;transform:scaleX(0.9255);">Vegetation</div>
<div style="position:absolute;left:860.00px;top:267.60px;width:9.70px;height:3.80px;border:1.3px solid #1a1a1a;box-sizing:border-box;border-radius:0.6px"></div>
<div style="position:absolute;left:882.00px;top:267.60px;width:9.80px;height:9.80px;border:1.3px solid #1a1a1a;box-sizing:border-box;border-radius:0.6px"></div>
<div style="position:absolute;left:882.00px;top:269.80px;width:9.80px;height:1.20px;background:#1a1a1a"></div>
<div style="position:absolute;left:614.20px;top:291.00px;width:290.00px;height:21.00px;border-top:1px solid #e6e6e6;border-left:1px solid #f0f0f0;border-top-left-radius:3px;box-sizing:border-box"></div>
<div style="position:absolute;left:615.20px;top:293.20px;width:290.00px;height:18.60px;background:linear-gradient(#e2e2e2,#f2f2f2 60%,#f9f9f9)"></div>
<svg width="9" height="6" viewBox="0 0 9 6" style="position:absolute;left:621.2px;top:300px"><path d="M0.3 0.3 H8.7 L4.5 5.2 Z" fill="#111"/></svg><div class="t b" style="left:634.90px;top:295.00px;transform:scaleX(0.9105);">Typ der Artenerfassung</div>
<div class="t" style="left:625.40px;top:321.00px;transform:scaleX(0.8757);">Typ der Erfassung</div>
<div class="t" style="left:625.40px;top:335.00px;transform:scaleX(0.9017);">der Pflanzenarten</div>
<div style="position:absolute;left:728.00px;top:320.00px;width:170.00px;height:22.00px;background:#cccccc;border:1px solid #bdbdbd;box-sizing:border-box"></div>
<svg width="10" height="6" viewBox="0 0 10 6" style="position:absolute;left:884px;top:328.5px"><path d="M0.8 0.8 L5 5 L9.2 0.8" fill="none" stroke="#a5a5a5" stroke-width="1.3"/></svg>
<div style="position:absolute;left:614.20px;top:358.50px;width:290.00px;height:21.00px;border-top:1px solid #e6e6e6;border-left:1px solid #f0f0f0;border-top-left-radius:3px;box-sizing:border-box"></div>
<div style="position:absolute;left:615.20px;top:360.70px;width:290.00px;height:18.60px;background:linear-gradient(#e2e2e2,#f2f2f2 60%,#f9f9f9)"></div>
<svg width="9" height="6" viewBox="0 0 9 6" style="position:absolute;left:621.2px;top:366.5px"><path d="M0.3 0.3 H8.7 L4.5 5.2 Z" fill="#111"/></svg><div class="t b" style="left:634.90px;top:363.00px;transform:scaleX(0.9367);">Vegetation</div>
<div class="t" style="left:625.20px;top:388.00px;transform:scaleX(0.9165);">Weitere Hinweise</div>
<div class="t" style="left:625.20px;top:403.00px;transform:scaleX(0.9124);">zur Vegetation</div>
<div style="position:absolute;left:728.00px;top:388.00px;width:170.00px;height:103.00px;background:#f0f0f0;border:1px solid #a0a0a0;box-sizing:border-box"></div>
<div style="position:absolute;left:879.50px;top:388.80px;width:1.00px;height:100.70px;background:#fbfbfb"></div>
<svg width="10" height="6" viewBox="0 0 10 6" style="position:absolute;left:883.5px;top:395.5px"><path d="M0.8 5 L5 0.8 L9.2 5" fill="none" stroke="#a8a8a8" stroke-width="1.2"/></svg><svg width="10" height="6" viewBox="0 0 10 6" style="position:absolute;left:883.5px;top:478.5px"><path d="M0.8 0.8 L5 5 L9.2 0.8" fill="none" stroke="#a8a8a8" stroke-width="1.2"/></svg>
<div class="t" style="left:734.00px;top:391.00px;transform:scaleX(0.8978);">Strandnelken-Rasen,</div>
<div class="t" style="left:734.00px;top:406.00px;transform:scaleX(0.9015);">Andelrasen, Sp&uuml;lsaum-</div>
<div class="t" style="left:734.00px;top:420.00px;transform:scaleX(0.8840);">Gesellschaften,</div>
<div class="t" style="left:734.00px;top:435.00px;transform:scaleX(0.9263);">Strandquecken-Vord&uuml;nen,</div>
<div class="t" style="left:734.00px;top:449.00px;transform:scaleX(0.9302);">Strandhafer-Wei&szlig;d&uuml;nen</div>
<div style="position:absolute;left:607.70px;top:957.70px;width:292.00px;height:15.00px;background:#f0f0f0"></div>
<div style="position:absolute;left:626.00px;top:957.70px;width:245.00px;height:15.00px;background:#cdcdcd"></div>
<svg width="8" height="10" viewBox="0 0 8 10" style="position:absolute;left:612.5px;top:960px"><path d="M5.8 1.2 L2 5 L5.8 8.8" fill="none" stroke="#5a5a5a" stroke-width="2"/></svg><svg width="8" height="10" viewBox="0 0 8 10" style="position:absolute;left:888px;top:960px"><path d="M2.2 1.2 L6 5 L2.2 8.8" fill="none" stroke="#5a5a5a" stroke-width="2"/></svg>
<div style="position:absolute;left:623.00px;top:983.20px;width:1.40px;height:1.40px;background:#a0a0a0"></div>
<div style="position:absolute;left:623.00px;top:987.10px;width:1.40px;height:1.40px;background:#a0a0a0"></div>
<div style="position:absolute;left:623.00px;top:990.90px;width:1.40px;height:1.40px;background:#a0a0a0"></div>
<div style="position:absolute;left:623.00px;top:994.70px;width:1.40px;height:1.40px;background:#a0a0a0"></div>
<div style="position:absolute;left:0.00px;top:1002.00px;width:899.00px;height:1.50px;background:#8e8e8e"></div>
<div style="position:absolute;left:145.60px;top:1002.20px;width:13.60px;height:1.00px;background:#3a3f48;opacity:0.7"></div>
<div style="position:absolute;left:299.40px;top:1002.20px;width:12.60px;height:1.00px;background:#3a3f48;opacity:0.7"></div>
<div style="position:absolute;left:320.70px;top:1002.20px;width:7.30px;height:1.00px;background:#3a3f48;opacity:0.7"></div>
<div style="position:absolute;left:332.70px;top:1002.20px;width:2.00px;height:1.00px;background:#3a3f48;opacity:0.7"></div>
<div style="position:absolute;left:352.00px;top:1002.20px;width:8.00px;height:1.00px;background:#3a3f48;opacity:0.7"></div>
<div style="position:absolute;left:364.00px;top:1002.20px;width:2.00px;height:1.00px;background:#3a3f48;opacity:0.7"></div>
<div style="position:absolute;left:454.00px;top:1002.20px;width:12.00px;height:1.00px;background:#3a3f48;opacity:0.7"></div>
<div style="position:absolute;left:474.00px;top:1002.20px;width:4.00px;height:1.00px;background:#3a3f48;opacity:0.7"></div>
<div style="position:absolute;left:491.60px;top:1002.20px;width:2.40px;height:1.00px;background:#3a3f48;opacity:0.7"></div>
<div style="position:absolute;left:509.00px;top:1002.20px;width:18.00px;height:1.00px;background:#3a3f48;opacity:0.7"></div>
<div style="position:absolute;left:531.00px;top:1002.20px;width:16.00px;height:1.00px;background:#3a3f48;opacity:0.7"></div>
</body></html>
